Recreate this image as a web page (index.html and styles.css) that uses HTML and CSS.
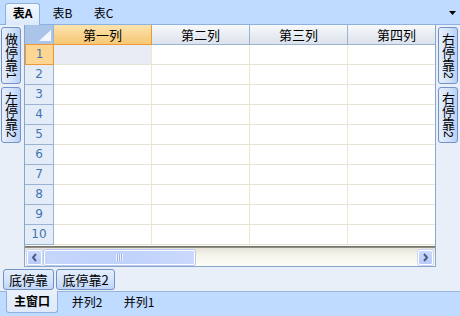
FILE: index.html
```html
<!DOCTYPE html>
<html>
<head>
<meta charset="utf-8">
<link rel="stylesheet" href="styles.css">
</head>
<body>
<div class="app">
  <div class="topbar">
    <div class="tab active">表A</div>
    <div class="tab first">表B</div>
    <div class="tab">表C</div>
    <div class="dropdown"><svg width="7" height="4" viewBox="0 0 7 4"><polygon points="0,0 7,0 3.5,4" fill="#000"/></svg></div>
  </div>
  <div class="middle">
    <div class="dock left">
      <div class="vbtn h57">做停靠<span class="side">1</span></div>
      <div class="vbtn h56">左停靠<span class="side">2</span></div>
    </div>
    <div class="grid">
      <div class="sheet">
        <div class="corner"><span class="tri"></span></div>
        <div class="colhead sel">第一列</div>
        <div class="colhead">第二列</div>
        <div class="colhead">第三列</div>
        <div class="colhead">第四列</div>

        <div class="rowhead sel">1</div><div class="cell cur"></div><div class="cell"></div><div class="cell"></div><div class="cell"></div>
        <div class="rowhead">2</div><div class="cell"></div><div class="cell"></div><div class="cell"></div><div class="cell"></div>
        <div class="rowhead">3</div><div class="cell"></div><div class="cell"></div><div class="cell"></div><div class="cell"></div>
        <div class="rowhead">4</div><div class="cell"></div><div class="cell"></div><div class="cell"></div><div class="cell"></div>
        <div class="rowhead">5</div><div class="cell"></div><div class="cell"></div><div class="cell"></div><div class="cell"></div>
        <div class="rowhead">6</div><div class="cell"></div><div class="cell"></div><div class="cell"></div><div class="cell"></div>
        <div class="rowhead">7</div><div class="cell"></div><div class="cell"></div><div class="cell"></div><div class="cell"></div>
        <div class="rowhead">8</div><div class="cell"></div><div class="cell"></div><div class="cell"></div><div class="cell"></div>
        <div class="rowhead">9</div><div class="cell"></div><div class="cell"></div><div class="cell"></div><div class="cell"></div>
        <div class="rowhead">10</div><div class="cell"></div><div class="cell"></div><div class="cell"></div><div class="cell"></div>
      </div>
      <div class="splitter"></div>
      <div class="hscroll">
        <div class="sbtn"><svg width="7" height="9" viewBox="0 0 7 9"><polyline points="5,1 2,4.5 5,8" fill="none" stroke="#4b5f86" stroke-width="2"/></svg></div>
        <div class="thumb"><span class="grip"></span></div>
        <div class="sbtn right"><svg width="7" height="9" viewBox="0 0 7 9"><polyline points="2,1 5,4.5 2,8" fill="none" stroke="#4b5f86" stroke-width="2"/></svg></div>
      </div>
    </div>
    <div class="dock right">
      <div class="vbtn h57">右停靠<span class="side">2</span></div>
      <div class="vbtn h56">右停靠<span class="side">2</span></div>
    </div>
  </div>
  <div class="bottomdock">
    <div class="hbtn w51">底停靠</div>
    <div class="hbtn w59">底停靠2</div>
  </div>
  <div class="bottombar">
    <div class="btab active">主窗口</div>
    <div class="btab">并列2</div>
    <div class="btab">并列1</div>
  </div>
</div>
</body>
</html>
```
FILE: styles.css
```css
* { box-sizing: border-box; }
html, body { margin: 0; padding: 0; }
body {
  font-family: "Noto Sans CJK SC", "Liberation Sans", sans-serif;
  font-size: 12px;
  color: #000;
  background: #e8eff9;
}
.app {
  width: 460px;
  height: 316px;
  display: flex;
  flex-direction: column;
  overflow: hidden;
  background: #e8eff9;
}

/* top tab bar */
.topbar {
  height: 25px;
  flex: none;
  background: #bfdbff;
  border-bottom: 1px solid #8db0dc;
  display: flex;
  align-items: flex-end;
}
.tab {
  width: 41px;
  height: 21px;
  line-height: 17px;
  text-align: center;
  margin-bottom: -1px;
}
.tab.active {
  width: 35px;
  margin-left: 5px;
  font-weight: bold;
  background: linear-gradient(#f2f7fe, #dce9fb);
  border: 1px solid #8db0dc;
  border-bottom: none;
  border-radius: 3px 3px 0 0;
  height: 22px;
}
.tab.first { margin-left: 2px; }
.dropdown {
  margin-left: auto;
  margin-right: 4px;
  align-self: flex-start;
  margin-top: 10px;
  height: 4px;
  line-height: 0;
}

/* middle */
.middle {
  height: 242px;
  flex: none;
  display: flex;
}
.dock {
  width: 24px;
  flex: none;
  display: flex;
  flex-direction: column;
  gap: 3px;
  padding-top: 2px;
}
.dock.left { padding-left: 1px; }
.dock.right { padding-left: 2px; }
.vbtn {
  width: 20px;
  writing-mode: vertical-rl;
  text-orientation: upright;
  line-height: 18px;
  font-size: 13px;
  text-align: center;
  border: 1px solid #7392c6;
  border-radius: 3px;
  background: linear-gradient(to right, #e6effc, #d2e2fa 55%, #b6d0f6);
}
.vbtn .side {
  text-orientation: sideways;
  font-family: "Liberation Sans", sans-serif;
  font-size: 12px;
}
.h57 { height: 57px; }
.h56 { height: 56px; }

/* grid */
.grid {
  width: 412px;
  flex: none;
  border: 1px solid #8aa5c7;
  border-top: none;
  background: #fff;
  display: flex;
  flex-direction: column;
}
.sheet {
  height: 220px;
  display: grid;
  grid-template-columns: 29px 98px 98px 98px 98px;
  grid-auto-rows: 20px;
  overflow: hidden;
}
.corner {
  position: relative;
  background: #abc5ea;
  border-right: 1px solid #9ab3d1;
  border-bottom: 1px solid #9ab3d1;
}
.tri {
  position: absolute;
  right: 2px;
  bottom: 3px;
  width: 0;
  height: 0;
  border-left: 12px solid transparent;
  border-bottom: 11px solid #f4f7fb;
}
.colhead {
  background: linear-gradient(#f8f9fb, #e9edf3 50%, #dce3ed);
  border-right: 1px solid #9ab3d1;
  border-bottom: 1px solid #9ab3d1;
  text-align: center;
  line-height: 19px;
  font-size: 13px;
}
.colhead.sel {
  background: linear-gradient(#fbe4b0, #f9d591 50%, #f6c872);
  border-right-color: #f19a35;
  border-bottom-color: #f19a35;
  box-shadow: -1px 0 0 #f19a35;
}
.rowhead {
  background: #e4ecf7;
  border-right: 1px solid #9ab3d1;
  border-bottom: 1px solid #9ab3d1;
  color: #3f74b3;
  font-family: "DejaVu Sans", "Liberation Sans", sans-serif;
  font-size: 12px;
  text-align: center;
  line-height: 19px;
}
.rowhead.sel {
  background: #fdd693;
  border-right-color: #f19a35;
  border-bottom-color: #f19a35;
  border-left: 1px solid #f19a35;
  box-shadow: 0 -1px 0 #f19a35;
  position: relative;
}
.cell {
  border-right: 1px solid #f0e8cc;
  border-bottom: 1px solid #e7e4d6;
}
.cell.cur { background: #e9ecf4; }

.splitter {
  height: 3px;
  border-top: 1px solid #fbfaf2;
  background: linear-gradient(#6f6e66, #9a998f);
  flex: none;
}
.hscroll {
  height: 18px;
  flex: none;
  display: flex;
  align-items: center;
  padding: 0 1px;
  background: linear-gradient(#e6e4d8, #f6f5ec 40%, #fdfdf7);
}
.sbtn {
  width: 15px;
  height: 15px;
  margin-left: 1px;
  border: 1px solid #fff;
  border-radius: 2px;
  background: linear-gradient(#ccdafc, #b8cbf7);
  box-shadow: 0 0 0 1px #c9d6f3;
  display: flex;
  align-items: center;
  justify-content: center;
}
.sbtn.right { margin-left: auto; margin-right: 1px; }
.thumb {
  width: 151px;
  height: 15px;
  margin-left: 2px;
  border: 1px solid #fff;
  border-radius: 2px;
  background: linear-gradient(to right, #c6d6fb, #c0d2fb 50%, #cad9fc);
  box-shadow: 0 0 0 1px #b7c9f2;
  display: flex;
  align-items: center;
  justify-content: center;
}
.grip {
  width: 7px;
  height: 7px;
  background: repeating-linear-gradient(to right, #eef3ff 0 1px, #9fb4e4 1px 2px);
}

/* bottom dock */
.bottomdock {
  height: 24px;
  flex: none;
  display: flex;
  gap: 2px;
  padding: 2px 0 0 3px;
}
.hbtn {
  height: 21px;
  line-height: 19px;
  font-size: 13px;
  text-align: center;
  border: 1px solid #7392c6;
  border-radius: 3px;
  background: linear-gradient(#e3edfc, #d3e3fb 55%, #c0d6f8);
}
.w51 { width: 51px; }
.w59 { width: 59px; }

/* bottom tab bar */
.bottombar {
  height: 25px;
  flex: none;
  background: #bfdbff;
  border-top: 1px solid #97b4db;
  display: flex;
  align-items: flex-start;
}
.btab {
  width: 52px;
  height: 21px;
  line-height: 20px;
  text-align: center;
}
.btab.active {
  margin-left: 6px;
  margin-right: 3px;
  margin-top: -1px;
  height: 22px;
  font-weight: bold;
  background: linear-gradient(#eaf1fb, #dfe9f9);
  border: 1px solid #8db0dc;
  border-top: none;
  border-radius: 0 0 3px 3px;
}
```
